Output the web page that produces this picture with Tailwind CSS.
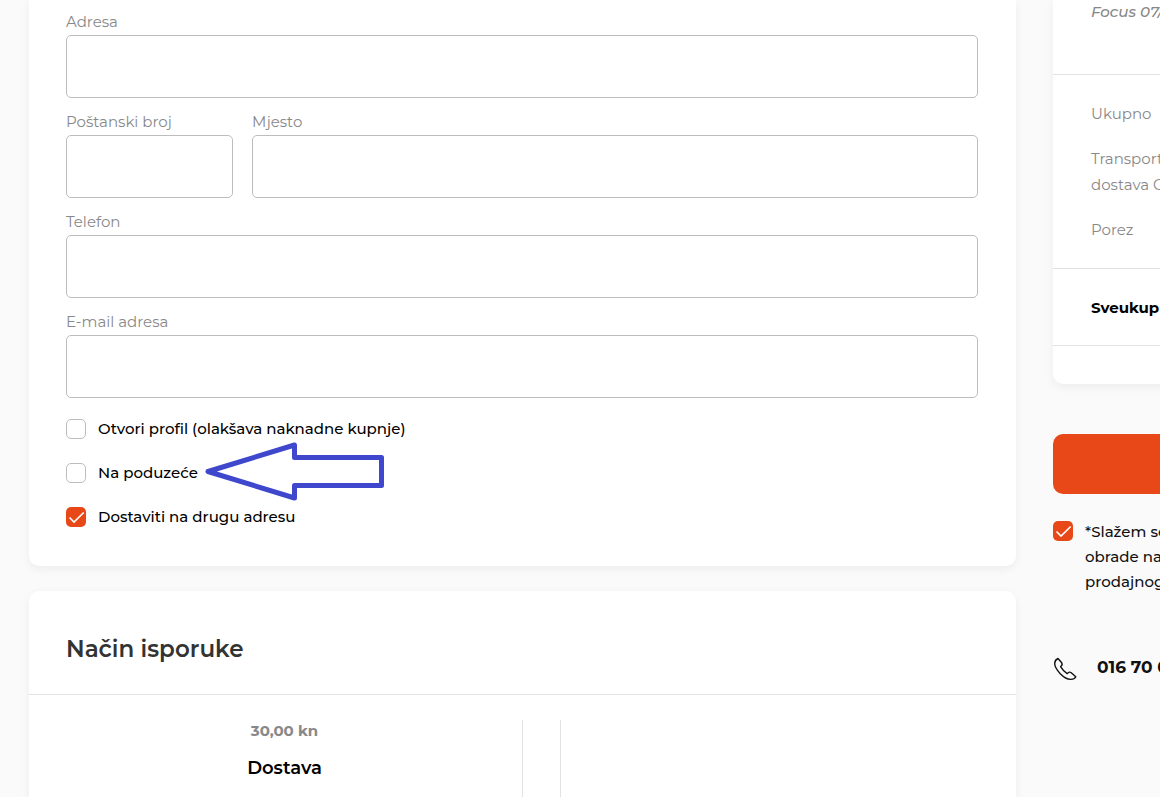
<!DOCTYPE html>
<html lang="hr">
<head>
<meta charset="utf-8">
<meta name="viewport" content="width=device-width, initial-scale=1">
<title>Narudžba</title>
<script src="https://cdn.jsdelivr.net/npm/@tailwindcss/browser@4"></script>
</head>
<body class="h-screen overflow-hidden bg-[#fafafa] font-[Montserrat,Inter,sans-serif] text-[15px] text-black">
<div class="flex min-h-screen gap-[37px] pl-[29px]">
  <main class="flex min-w-0 flex-1 flex-col gap-[25px]">
    <section class="rounded-b-[10px] bg-white pt-3 pr-[38px] pb-[39px] pl-[37px] shadow-[0_3px_10px_rgba(0,0,0,0.06)]">
      <form>
        <div class="flex flex-col gap-[14px] leading-5 text-[#888]">
          <div>
            <label for="adresa" class="mb-[3px] block">Adresa</label>
            <input id="adresa" type="text" class="block h-[63px] w-full rounded-[5px] border border-[#bdbdbd] bg-white px-4">
          </div>
          <div class="flex gap-[19px]">
            <div class="w-[167px]">
              <label for="posta" class="mb-[3px] block">Poštanski broj</label>
              <input id="posta" type="text" class="block h-[63px] w-full rounded-[5px] border border-[#bdbdbd] bg-white px-4">
            </div>
            <div class="flex-1">
              <label for="mjesto" class="mb-[3px] block">Mjesto</label>
              <input id="mjesto" type="text" class="block h-[63px] w-full rounded-[5px] border border-[#bdbdbd] bg-white px-4">
            </div>
          </div>
          <div>
            <label for="telefon" class="mb-[3px] block">Telefon</label>
            <input id="telefon" type="tel" class="block h-[63px] w-full rounded-[5px] border border-[#bdbdbd] bg-white px-4">
          </div>
          <div>
            <label for="email" class="mb-[3px] block">E-mail adresa</label>
            <input id="email" type="email" class="block h-[63px] w-full rounded-[5px] border border-[#bdbdbd] bg-white px-4">
          </div>
        </div>
        <div class="relative mt-[21px] flex flex-col gap-6 leading-5 font-medium">
          <div class="flex items-center gap-[12px]">
            <input id="profil" type="checkbox" class="size-5 appearance-none rounded-[5px] border border-[#bdbdbd] bg-white">
            <label for="profil">Otvori profil (olakšava naknadne kupnje)</label>
          </div>
          <div class="flex items-center gap-[12px]">
            <input id="poduzece" type="checkbox" class="size-5 appearance-none rounded-[5px] border border-[#bdbdbd] bg-white">
            <label for="poduzece">Na poduzeće</label>
          </div>
          <div class="flex items-center gap-[12px]">
            <span class="grid size-5">
              <input id="dostava" type="checkbox" checked class="col-start-1 row-start-1 size-5 appearance-none rounded-[5px] bg-[#e84817]">
              <svg class="pointer-events-none col-start-1 row-start-1" width="20" height="20" viewBox="0 0 20 20" fill="none" stroke="#fff" stroke-width="1.6"><path d="M3.500 10.500 8 15 17.700 5.500"/></svg>
            </span>
            <label for="dostava">Dostaviti na drugu adresu</label>
          </div>
          <svg class="pointer-events-none absolute top-[21px] left-[138px]" width="182" height="62" viewBox="0 0 182 62" fill="none" stroke="#3f48cc" stroke-width="5" stroke-linejoin="round"><path d="M4 31.500 90.500 5V17.500H177.500V45.500H90.500V58Z"/></svg>
        </div>
      </form>
    </section>

    <section class="flex flex-1 flex-col rounded-t-[10px] bg-white shadow-[0_3px_10px_rgba(0,0,0,0.06)]">
      <h2 class="border-b border-[#e2e2e2] px-[37px] pt-[42px] pb-[29px] text-[23px] leading-8 font-semibold text-[#333]">Način isporuke</h2>
      <div class="grid flex-1 grid-cols-[476fr_456fr] gap-[37px] pt-[25px] pl-[18px]">
        <div class="border-r border-[#e2e2e2] text-center">
          <p class="leading-[22px] font-bold text-[#888]">30,00 kn</p>
          <p class="mt-[14px] text-[18px] leading-6 font-semibold">Dostava</p>
        </div>
        <div class="border-l border-[#e2e2e2]"></div>
      </div>
    </section>
  </main>

  <aside class="w-[107px] whitespace-nowrap">
    <section class="-mr-5 rounded-bl-[10px] bg-white pb-[38px] text-[#888] shadow-[0_3px_10px_rgba(0,0,0,0.06)]">
      <p class="border-b border-[#e2e2e2] pb-[50px] pl-[38px] leading-6 font-medium italic">Focus 07/</p>
      <div class="border-b border-[#e2e2e2] pt-[26px] pb-[25px] pl-[38px] leading-[26px]">
        <p>Ukupno</p>
        <p class="mt-[19px]">Transport<br>dostava G</p>
        <p class="mt-[19px]">Porez</p>
      </div>
      <p class="border-b border-[#e2e2e2] pt-[27px] pb-[25px] pl-[38px] leading-6 font-bold text-black">Sveukupno</p>
    </section>
    <button type="button" aria-label="Naruči" class="mt-[50px] block h-[60px] w-full rounded-l-[10px] bg-[#e84817]"></button>
    <div class="mt-[25px] flex gap-[12px] leading-[25px] font-medium text-[#111]">
      <span class="mt-[2px] grid size-5 shrink-0">
        <input id="uvjeti" type="checkbox" checked class="col-start-1 row-start-1 size-5 appearance-none rounded-[5px] bg-[#e84817]">
        <svg class="pointer-events-none col-start-1 row-start-1" width="20" height="20" viewBox="0 0 20 20" fill="none" stroke="#fff" stroke-width="1.6"><path d="M3.500 10.500 8 15 17.700 5.500"/></svg>
      </span>
      <label for="uvjeti">*Slažem se<br>obrade na<br>prodajnog</label>
    </div>
    <div class="mt-[61px] flex gap-5 text-[17px] leading-6 font-bold text-[#111]">
      <svg class="mt-[2px] shrink-0" width="24" height="24" viewBox="0 0 24 24" fill="none" stroke="#111" stroke-width="1.4" stroke-linejoin="round"><path d="M5 1.500C3 2.300 1.800 4 1.700 6.500 1.700 10 5 14.300 7.500 17 10.500 20 14 22.300 17.500 22.400 20 22.500 22 21.500 22.800 19.800L18.200 15.700C17 14.800 15.700 15 14.800 16.200L14.200 16.600C12 15.200 9 12 7.600 9.600L8.200 8.900C9.300 8.100 9.400 7 8.700 5.800Z"/></svg>
      <a href="tel:016700">016 70 0</a>
    </div>
  </aside>
</div>
</body>
</html>
